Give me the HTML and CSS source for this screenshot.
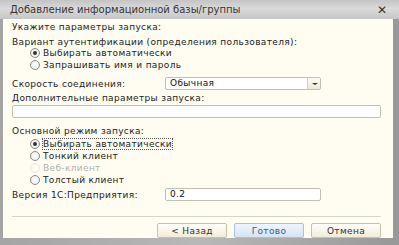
FILE: index.html
```html
<!DOCTYPE html>
<html>
  <head>
    <title>Добавление информационной базы/группы</title>
    <link rel="stylesheet" href="styles.css">
  </head>
  <body>
    <div class="window">
      <div class="titlebar">
        <span class="title">Добавление информационной базы/группы</span>
        <span class="close">✕</span>
      </div>
      <div class="content">
        <div class="line first">Укажите параметры запуска:</div>
        <div class="line auth">Вариант аутентификации (определения пользователя):</div>
        <div class="radios auth-radios">
          <div class="radio checked"><span class="dot"></span>Выбирать автоматически</div>
          <div class="radio"><span class="dot"></span>Запрашивать имя и пароль</div>
        </div>
        <div class="field speed">
          <span class="label">Скорость соединения:</span>
          <div class="select">
            <span class="value">Обычная</span>
            <span class="arrow"></span>
          </div>
        </div>
        <div class="line extra">Дополнительные параметры запуска:</div>
        <div class="input wide"></div>
        <div class="line mode">Основной режим запуска:</div>
        <div class="radios mode-radios">
          <div class="radio checked"><span class="dot"></span><span class="focus">Выбирать автоматически</span></div>
          <div class="radio"><span class="dot"></span>Тонкий клиент</div>
          <div class="radio disabled"><span class="dot"></span>Веб-клиент</div>
          <div class="radio"><span class="dot"></span>Толстый клиент</div>
        </div>
        <div class="field version">
          <span class="label">Версия 1С:Предприятия:</span>
          <div class="input short">0.2</div>
        </div>
        <div class="separator"></div>
        <div class="buttons">
          <button class="btn">&lt; Назад</button>
          <button class="btn default">Готово</button>
          <button class="btn">Отмена</button>
        </div>
      </div>
    </div>
  </body>
</html>
```

FILE: styles.css
```css
body {
  margin: 0;
  font-family: "DejaVu Sans", Verdana, sans-serif;
  font-size: 9px;
  letter-spacing: 0.35px;
  color: #222;
  background: #9a9a9a;
}
.window {
  width: 399px;
  height: 245px;
  box-sizing: border-box;
  padding: 0 6px 7px 3px;
  background: linear-gradient(90deg, #a4a4a4, #b8b8b8 50%, #989898);
  display: flex;
  flex-direction: column;
}
.titlebar {
  height: 19px;
  flex: none;
  margin: 0 -6px 0 -3px;
  padding: 0 10px 0 10px;
  display: flex;
  align-items: center;
  justify-content: space-between;
  background: linear-gradient(#c4c4c4, #dadada 45%, #c6c6c6);
  color: #333;
  font-size: 10px;
  letter-spacing: 0;
}
.close {
  font-weight: bold;
  font-size: 12px;
  color: #333;
  margin-right: 2px;
}
.content {
  flex: 1;
  background: #fffdf1;
  padding: 0 7px 0 9px;
  display: flex;
  flex-direction: column;
}
.line {
  height: 12px;
  line-height: 12px;
  flex: none;
}
.first {
  margin-top: 2px;
}
.auth {
  margin-top: 3px;
}
.auth-radios {
  margin-top: -1px;
}
.radios {
  padding-left: 18px;
}
.radio {
  height: 12px;
  line-height: 12px;
  display: flex;
  align-items: center;
}
.dot {
  width: 8px;
  height: 8px;
  border: 1px solid #8a8a8a;
  border-radius: 50%;
  background: radial-gradient(#ffffff, #e6e6e6);
  margin-right: 3px;
  position: relative;
  flex: none;
}
.checked .dot::after {
  content: "";
  position: absolute;
  left: 2px;
  top: 2px;
  width: 4px;
  height: 4px;
  border-radius: 50%;
  background: #333;
}
.disabled {
  color: #b0b0b0;
}
.disabled .dot {
  border-color: #e6e6e6;
  background: #fffdf1;
}
.focus {
  outline: 1px dotted #555;
  line-height: 10px;
}
.field {
  display: flex;
  align-items: center;
  height: 13px;
  flex: none;
}
.speed {
  margin-top: 6px;
}
.version {
  margin-top: 2px;
}
.label {
  width: 153px;
}
.select,
.input {
  height: 11px;
  line-height: 11px;
  border: 1px solid #c4c0b0;
  border-radius: 2px;
  background: #fff;
  padding-left: 4px;
  flex: none;
  color: #111;
}
.select {
  width: 150px;
  display: flex;
  justify-content: space-between;
}
.arrow {
  width: 12px;
  border-left: 1px solid #d4d0c0;
  background: linear-gradient(#fbfbf6, #ece8da);
  position: relative;
}
.arrow::after {
  content: "";
  position: absolute;
  left: 4px;
  top: 5px;
  border-left: 3px solid transparent;
  border-right: 3px solid transparent;
  border-top: 2px solid #333;
}
.extra {
  margin-top: 2px;
}
.wide {
  margin: 1px 5px 0 0;
}
.mode {
  margin-top: 7px;
}
.mode-radios {
  margin-top: 1px;
}
.short {
  width: 150px;
}
.separator {
  height: 1px;
  flex: none;
  background: #d8d4c2;
  border-bottom: 1px solid #ffffff;
  margin: 15px 5px 0 0;
}
.buttons {
  display: flex;
  justify-content: flex-end;
  gap: 7px;
  padding-right: 5px;
  margin-top: 5px;
}
.btn {
  width: 70px;
  height: 15px;
  padding: 0;
  font-family: "DejaVu Sans", Verdana, sans-serif;
  font-size: 9px;
  letter-spacing: 0.35px;
  color: #333;
  border: 1px solid #c8c0a8;
  border-radius: 2px;
  background: linear-gradient(#fffefa, #f2ecd8);
}
.default {
  color: #3a5a80;
  border-color: #a8c0d8;
  background: linear-gradient(#eef6ff, #d4e4f4);
}
```
